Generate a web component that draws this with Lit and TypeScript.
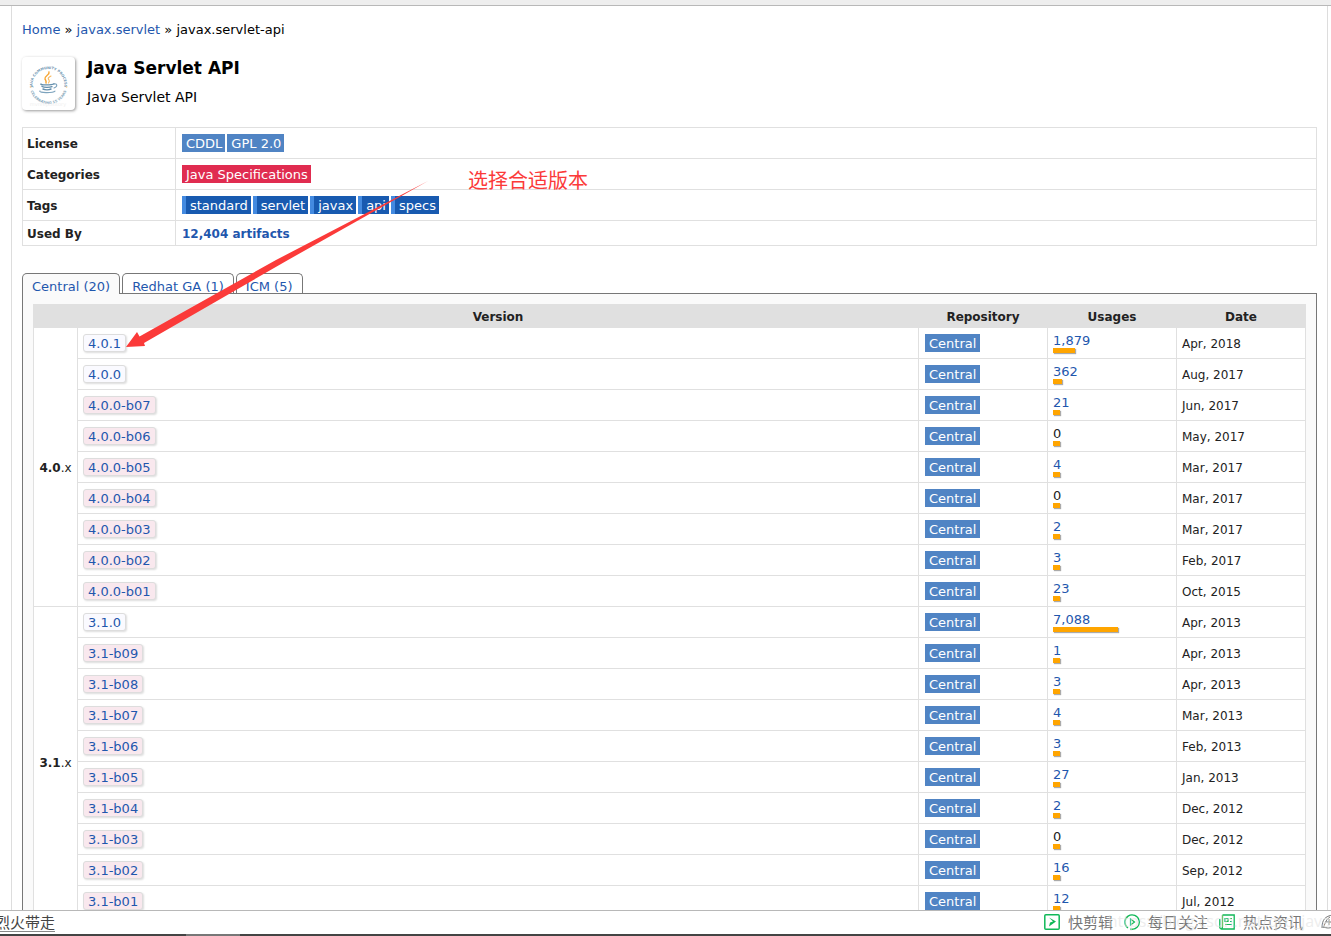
import { LitElement, html, css, svg, nothing } from "lit";
import { customElement } from "lit/decorators.js";

type Release = [version: string, usages: number, date: string];

const GROUPS: { name: string; rows: Release[] }[] = [
  {
    name: "4.0",
    rows: [
      ["4.0.1", 1879, "Apr, 2018"],
      ["4.0.0", 362, "Aug, 2017"],
      ["4.0.0-b07", 21, "Jun, 2017"],
      ["4.0.0-b06", 0, "May, 2017"],
      ["4.0.0-b05", 4, "Mar, 2017"],
      ["4.0.0-b04", 0, "Mar, 2017"],
      ["4.0.0-b03", 2, "Mar, 2017"],
      ["4.0.0-b02", 3, "Feb, 2017"],
      ["4.0.0-b01", 23, "Oct, 2015"],
    ],
  },
  {
    name: "3.1",
    rows: [
      ["3.1.0", 7088, "Apr, 2013"],
      ["3.1-b09", 1, "Apr, 2013"],
      ["3.1-b08", 3, "Apr, 2013"],
      ["3.1-b07", 4, "Mar, 2013"],
      ["3.1-b06", 3, "Feb, 2013"],
      ["3.1-b05", 27, "Jan, 2013"],
      ["3.1-b04", 2, "Dec, 2012"],
      ["3.1-b03", 0, "Dec, 2012"],
      ["3.1-b02", 16, "Sep, 2012"],
      ["3.1-b01", 12, "Jul, 2012"],
    ],
  },
];

const barWidth = (n: number) => Math.max(7, Math.round(n / 120) + 6);

@customElement("version-table")
export class VersionTable extends LitElement {
  static styles = css`
    :host { display: block; }
    table { width: 100%; border-collapse: collapse; table-layout: fixed; background: #fff; }
    .c-group { width: 44px; }
    .c-side { width: 129px; }
    th { color: #222; font-weight: bold; font-size: 12px; }
    thead th { height: 21px; padding: 2px 0 0; background: #e0e0e0; border: solid #e0e0e0; border-width: 0 1px; }
    tbody th, td { border: 1px solid #e0e0e0; }
    tbody th { padding: 2px 0 0; text-align: center; }
    .x { font-weight: normal; }
    td { height: 30px; padding: 0 5px; text-align: left; vertical-align: middle; color: #222; }
    .date { height: 28px; padding-top: 2px; font-size: 12px; }
    a { color: #1f57ad; text-decoration: none; }
    .vbtn {
      display: inline-block; box-sizing: border-box; height: 18px; line-height: 18px; padding: 0 4px;
      border: 1px solid #ddd; border-radius: 3px; background: #fafaff;
      box-shadow: 1px 1px 2px #ddd; vertical-align: middle;
    }
    .beta { background: #f9e8ee; }
    .repo {
      display: inline-block; height: 18px; line-height: 20px; padding: 0 4px; margin-left: 1px;
      background: #5084c4; color: #fff; vertical-align: middle;
    }
    .use { display: block; height: 14px; line-height: 14px; }
    .bar { height: 5px; background: #ffa500; box-shadow: 1px 1px 1px #aaa; }
  `;

  render() {
    return html`<table>
      <colgroup>
        <col class="c-group" /><col />
        <col class="c-side" /><col class="c-side" /><col class="c-side" />
      </colgroup>
      <thead>
        <tr>
          <th></th>
          <th scope="col">Version</th>
          <th scope="col">Repository</th>
          <th scope="col">Usages</th>
          <th scope="col">Date</th>
        </tr>
      </thead>
      <tbody>
        ${GROUPS.map((g) =>
          g.rows.map(
            ([version, usages, date], i) => html`<tr>
              ${i === 0
                ? html`<th scope="rowgroup" rowspan=${g.rows.length}>${g.name}<span class="x">.x</span></th>`
                : nothing}
              <td><a class="vbtn ${version.includes("-b") ? "beta" : ""}" href="#${version}">${version}</a></td>
              <td><a class="repo" href="#central">Central</a></td>
              <td>
                ${usages
                  ? html`<a class="use" href="#usages">${usages.toLocaleString("en-US")}</a>`
                  : html`<span class="use">0</span>`}
                <div class="bar" style="width:${barWidth(usages)}px"></div>
              </td>
              <td class="date">${date}</td>
            </tr>`
          )
        )}
      </tbody>
    </table>`;
  }
}

const logo = svg`
  <defs>
    <path id="arc-top" d="M10.800 31 A16 16 0 1 1 42.200 31" />
    <path id="arc-bottom" d="M7.500 28 A19 19 0 0 0 45.500 28" />
  </defs>
  <text class="ring"><textPath href="#arc-top" startOffset="50%" text-anchor="middle">JAVA COMMUNITY PROCESS</textPath></text>
  <text class="ring low"><textPath href="#arc-bottom" startOffset="50%" text-anchor="middle">CELEBRATING 15 YEARS</textPath></text>
  <text class="faint" x="26" y="49" text-anchor="middle">mvnrepository</text>
  <circle cx="8.500" cy="30" r=".8" fill="#f9c987" /><circle cx="44.500" cy="30" r=".8" fill="#f9c987" />
  <g fill="none" stroke-linecap="round">
    <path d="M27 15c1 3-5 4-4 7 .4 1.200 1.500 1.500 1 4" stroke="#f7a839" stroke-width="1.500" />
    <path d="M29 19c-3 1.500-3.500 2.500-2 4 .7 1 .3 2-.5 3" stroke="#f9b85c" stroke-width="1.100" />
    <path d="M19 27c-1.500 1.300 11 1.200 13-.2M20 29.500c2 1.200 8 1 10 .2M21 32c2 1 6 1 8 0" stroke="#648eac" stroke-width="1.400" />
    <path d="M31.500 27c4-.8 4.500 2.500.5 4M18 34c-2 2 13 2.200 15 .2" stroke="#7da3bd" stroke-width="1.100" />
  </g>`;

@customElement("app-root")
export class AppRoot extends LitElement {
  static styles = css`
    :host {
      display: flex; flex-direction: column; height: 100vh; overflow: hidden; background: #fff;
      font: 13px/16px "DejaVu Sans", Verdana, "Noto Sans CJK SC", sans-serif; color: #000;
    }
    a { color: #1f57ad; text-decoration: none; }
    .strip { flex: none; height: 5px; background: #eee; border-bottom: 1px solid #b8b8b8; }
    .view { flex: 1; min-height: 0; overflow: hidden; display: flex; }
    .page {
      position: relative; flex: 1; height: max-content; margin: 0 3px 0 11px; padding: 16px 10px 10px;
      border: 1px solid #ddd; border-width: 0 1px;
    }
    .head { display: flex; gap: 12px; margin: 19px 0 17px; }
    .logo {
      width: 53px; height: 53px; border-radius: 4px; background: #fff;
      box-shadow: 1px 1px 3px #999;
    }
    .ring { font: bold 3.500px "DejaVu Sans", sans-serif; fill: #6f96b2; }
    .low { fill: #8aaabd; }
    .faint { font: 5px "DejaVu Sans", sans-serif; fill: #f0f0f0; }
    h1 { margin: 0 0 10px; font-size: 17px; line-height: 22px; }
    p { margin: 0; font-size: 14px; }
    .info { width: 100%; border-collapse: collapse; }
    .info th, .info td { border: 1px solid #e0e0e0; height: 30px; padding: 0 4px; text-align: left; }
    .info th { width: 144px; height: 28px; padding-top: 2px; color: #222; font-size: 12px; }
    .info td { padding-left: 6px; }
    .info .short { height: 22px; padding-top: 2px; }
    .chips { display: flex; gap: 2px; }
    .chip { height: 18px; line-height: 20px; padding: 0 3px 0 4px; background: #5084c4; color: #fff; }
    .cat { background: #e02c50; }
    .tag { background: #185ab0; border-left: 4px solid #438ae0; }
    .used { font-weight: bold; font-size: 12px; }
    .tabs { display: flex; gap: 2px; margin-top: 27px; }
    .tab {
      height: 19px; line-height: 25px; padding: 0 9px; background: #fff; overflow: hidden;
      border: 1px solid #777; border-bottom: 0; border-radius: 5px 5px 0 0;
    }
    .active { background: #fafafa; position: relative; height: 20px; z-index: 1; }
    .panel { border: 1px solid #777; background: #fafafa; padding: 10px; margin-top: -1px; }
    .note {
      position: absolute; left: 456px; top: 160px; color: #fb3a39;
      font: 20px/28px "Noto Sans CJK SC", sans-serif;
    }
    .arrow { position: absolute; left: 110px; top: 170px; fill: #fb3a39; pointer-events: none; }
    .bar {
      position: relative; flex: none; display: flex; align-items: center; box-sizing: border-box; height: 26px;
      border-top: 1px solid #b8b8b8; padding-bottom: 3px; background: #fff; overflow: hidden;
      font: 15px/22px "Noto Sans CJK SC", sans-serif; color: #777;
    }
    .bar::after {
      content: ""; position: absolute; left: 0; right: 0; bottom: 0; height: 2px;
      background: linear-gradient(90deg, #444 14%, #777 14%, #777 18%, #444 18%);
    }
    .bar a { color: #777; display: flex; align-items: center; gap: 8px; margin-right: 11px; white-space: nowrap; }
    .bar .news { color: #444; margin: 0 auto 0 -5px; line-height: 18px; border-bottom: 1px solid #888; }
    .bar .last { margin-right: -6px; margin-left: 7px; }
    .bar svg { display: block; fill: none; stroke: #10b858; stroke-width: 1.500; }
    .bar .last svg { stroke: #777; stroke-width: 1; }
    .mark {
      position: absolute; right: 0; top: -1px; color: rgba(225, 225, 225, .6); pointer-events: none;
      font: 16px/22px "Open Sans", sans-serif;
    }
  `;

  render() {
    return html`
      <div class="strip"></div>
      <div class="view">
        <main class="page">
          <nav>
            <a href="#home">Home</a> » <a href="#group">javax.servlet</a> » javax.servlet-api
          </nav>
          <header class="head">
            <svg class="logo" viewBox="0 0 53 53" role="img" aria-label="Java Community Process">${logo}</svg>
            <div>
              <h1>Java Servlet API</h1>
              <p>Java Servlet API</p>
            </div>
          </header>
          <table class="info">
            <tr>
              <th scope="row">License</th>
              <td><div class="chips"><a class="chip" href="#cddl">CDDL</a><a class="chip" href="#gpl">GPL 2.0</a></div></td>
            </tr>
            <tr>
              <th scope="row">Categories</th>
              <td><div class="chips"><a class="chip cat" href="#specs">Java Specifications</a></div></td>
            </tr>
            <tr>
              <th scope="row">Tags</th>
              <td>
                <div class="chips">
                  ${["standard", "servlet", "javax", "api", "specs"].map(
                    (t) => html`<a class="chip tag" href="#${t}">${t}</a>`
                  )}
                </div>
              </td>
            </tr>
            <tr>
              <th class="short" scope="row">Used By</th>
              <td class="short"><a class="used" href="#used">12,404 artifacts</a></td>
            </tr>
          </table>
          <nav class="tabs">
            <a class="tab active" href="#central">Central (20)</a>
            <a class="tab" href="#redhat">Redhat GA (1)</a>
            <a class="tab" href="#icm">ICM (5)</a>
          </nav>
          <section class="panel"><version-table></version-table></section>
          <svg class="arrow" width="310" height="176" viewBox="122 176 310 176" aria-hidden="true">
            <path d="M126 347L137 332L139.500 336.500L276 260L428 181L288 260L144 343L145 346Z" />
          </svg>
          <div class="note">选择合适版本</div>
        </main>
      </div>
      <footer class="bar">
        <a class="news" href="#news">烈火带走</a>
        <a href="#clip">
          <svg width="16" height="16" viewBox="0 0 16 16"><rect x=".8" y=".8" width="14.400" height="14.400" rx="1" /><path d="M5 3.500L12 7.500L5 12.500L6 8.500L9 7.500Z" fill="#10b858" stroke="none" /></svg>快剪辑</a>
        <a href="#daily">
          <svg width="16" height="16" viewBox="0 0 16 16"><path d="M4 14a7.200 7.200 0 1 1 3 1.200M6 15.200h3a7 7 0 0 0 4-2" stroke-width="1.300" /><path d="M6.500 5L10.500 8L6.500 11Z" stroke-width="1.200" /></svg>每日关注</a>
        <a href="#hot">
          <svg width="16" height="16" viewBox="0 0 16 16"><path d="M3.500 1h11.700v14H2.500A1.700 1.700 0 0 1 .8 13.500V5M3.500 1v11.500q0 2-1.300 2.300" stroke-width="1.300" /><path d="M6 4.500h3v3H6zM11 4.500h2M11 7.500h2M6 10.500h7" stroke-width="1.200" /></svg>热点资讯</a>
        <a class="last" href="#boost" aria-label="加速">
          <svg width="16" height="16" viewBox="0 0 16 16"><path d="M1 14C1 6 4 2 12 1M2 14C4 11 4 6 9 3M8 5v6M5 8h6M3 13c4 2 9 1 11-3" /></svg></a>
        <span class="mark">https://blog.csdn.net/qrd_java</span>
      </footer>
    `;
  }
}
